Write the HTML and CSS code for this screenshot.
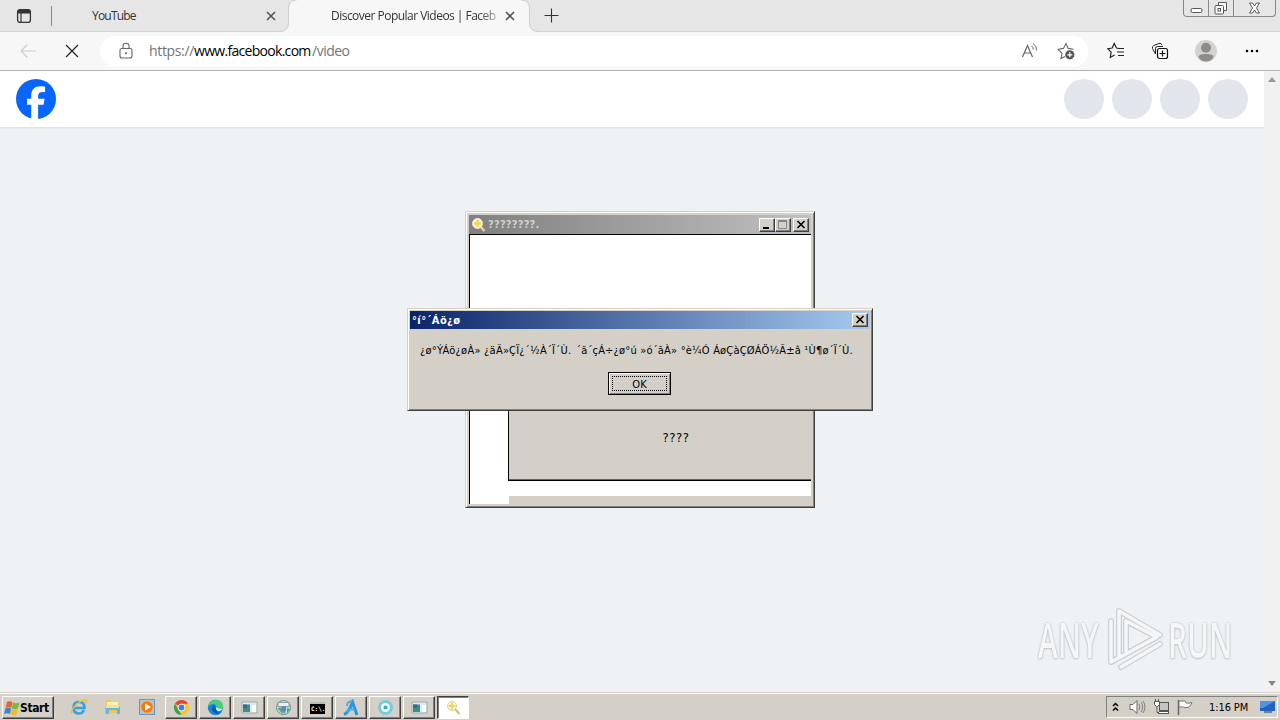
FILE: index.html
```html
<!DOCTYPE html>
<html lang="en">

<head>
    <meta charset="UTF-8">
    <title>Discover Popular Videos | Facebook</title>
    <link rel="stylesheet" href="styles.css">
</head>

<body>
    <div class="desktop">
        <div class="tabs">
            <div class="tab-actions">
                <svg width="16" height="16" viewBox="0 0 16 16"><rect x="1.6" y="1.6" width="12.8" height="12.8" rx="2.5" fill="none" stroke="#333" stroke-width="1.3"/><path d="M1.5 5.5V3.5q0-2 2-2h9q2 0 2 2v2z" fill="#333"/><path d="M5 5v9" stroke="#333" stroke-width="1.2"/></svg>
            </div>
            <div class="tab">
                <span class="tab-title">YouTube</span>
                <svg width="10" height="10" viewBox="0 0 10 10"><path d="M1 1l8 8M9 1l-8 8" stroke="#555" stroke-width="1.6"/></svg>
            </div>
            <div class="tab tab-active">
                <svg class="tab-shape" width="260" height="32" viewBox="0 0 260 32"><path d="M0 32q10 0 10-9V8q0-8 8-8h224q8 0 8 8v15q0 9 10 9z" fill="#f7f7f7"/><path d="M0 31.5q9.5 0 9.5-9V8q0-8 8-8M242 0q8.5 0 8.5 8v14.5q0 9 9.5 9" fill="none" stroke="#cfcfcf"/></svg>
                <span class="tab-title fade">Discover Popular Videos | Faceb</span>
                <svg width="10" height="10" viewBox="0 0 10 10"><path d="M1 1l8 8M9 1l-8 8" stroke="#555" stroke-width="1.6"/></svg>
            </div>
            <svg class="new-tab" width="15" height="15" viewBox="0 0 15 15"><path d="M7.5 0.5v14M0.5 7.5h14" stroke="#333" stroke-width="1.1"/></svg>
            <div class="win-controls">
                <span class="wc"><svg width="25" height="16" viewBox="0 0 25 16"><rect x="7" y="8.5" width="11" height="4" rx="1.5" fill="#fff" stroke="#555"/></svg></span>
                <span class="wc"><svg width="24" height="16" viewBox="0 0 24 16"><path d="M9.5 5.5v-3h8v8h-3" fill="#fff" stroke="#555"/><rect x="6" y="5.5" width="8.5" height="8.5" rx="1" fill="#fff" stroke="#555"/><rect x="9" y="8.5" width="2.5" height="2.5" fill="none" stroke="#555"/></svg></span>
                <span class="wc wide"><svg width="41" height="16" viewBox="0 0 41 16"><path d="M15.5 3h3l2 3 2-3h3l-3 5 3 5h-3l-2-3-2 3h-3l3-5z" fill="#fff" stroke="#555"/></svg></span>
            </div>
        </div>

        <div class="toolbar">
            <svg class="back" width="17" height="14" viewBox="0 0 17 14"><path d="M16 7H1M7.5 0.5L1 7l6.5 6.5" fill="none" stroke="#ccc" stroke-width="1.2"/></svg>
            <svg class="stop" width="14" height="14" viewBox="0 0 14 14"><path d="M1 1l12 12M13 1L1 13" stroke="#222" stroke-width="1.2"/></svg>
            <div class="address">
                <svg width="14" height="18" viewBox="0 0 14 18"><rect x="1" y="6.5" width="12" height="9.5" rx="2" fill="none" stroke="#666" stroke-width="1.1"/><path d="M4 6.5V4q0-2.8 3-2.8T10 4v2.5" fill="none" stroke="#666" stroke-width="1.1"/><circle cx="7" cy="11.3" r="1" fill="#555"/></svg>
                <span class="url"><span class="scheme">https://</span><span class="host">www.facebook.com</span><span class="path">/video</span></span>
                <svg class="read" width="18" height="18" viewBox="0 0 18 18"><path d="M1.5 15L6.5 3.5 11.5 15M3.3 11h6.5" fill="none" stroke="#666" stroke-width="1.2"/><path d="M10.5 4q1.8 1 1.8 3.5M12 1.5q3.8 2 3.6 7" fill="none" stroke="#666"/></svg>
                <svg width="18" height="18" viewBox="0 0 18 18"><path d="M16.5 7.3L11.2 6.4 9 1.5 6.4 6.4 1 7.3l4 4-1 5.2 4-2.1" fill="none" stroke="#666" stroke-width="1.1"/><circle cx="12.8" cy="12.8" r="4.6" fill="#555"/><path d="M12.8 10.3v5M10.3 12.8h5" stroke="#fff" stroke-width="1.2"/></svg>
            </div>
            <div class="tools">
                <svg width="18" height="18" viewBox="0 0 18 18"><path d="M11.5 6.3L9.5 6 7.2 1.5 5.2 6 .8 6.7l3.3 3.5-.8 5.3 4.3-2.4M10.5 6.5h6.5M10 10h7M11 13.5h6" fill="none" stroke="#222" stroke-width="1.2"/></svg>
                <svg class="collections" width="18" height="18" viewBox="0 0 18 18"><path d="M4.5 12L1.5 6.5Q.8 4.5 2.8 3.5L8 1.5q2.5-.6 3 1.5M4.5 12V6.5q0-2 2-2H12" fill="none" stroke="#222"/><rect x="6.5" y="6.5" width="10" height="10" rx="2" fill="#f7f7f7" stroke="#111" stroke-width="1.2"/><path d="M11.5 8.5v6M8.5 11.5h6" stroke="#111" stroke-width="1.2"/></svg>
                <svg class="avatar" width="22" height="22" viewBox="0 0 22 22"><circle cx="11" cy="11" r="11" fill="#d4d2d0"/><circle cx="11" cy="7.7" r="5" fill="#8e8b89"/><path d="M3.5 17q0-3 7.5-3t7.5 3q-2.5 4.5-7.5 4.5T3.5 17z" fill="#8e8b89"/></svg>
                <svg width="14" height="4" viewBox="0 0 14 4"><circle cx="2" cy="2" r="1.3"/><circle cx="7" cy="2" r="1.3"/><circle cx="12" cy="2" r="1.3"/></svg>
            </div>
        </div>

        <div class="page">
            <div class="site">
                <div class="site-header">
                    <svg width="40" height="40" viewBox="0 0 40 40"><circle cx="20" cy="20" r="20" fill="#0866ff"/><path d="M15.2 40V25.8h-4.2v-6h4.2v-2.7c0-6.8 3.2-9.9 9.7-9.9 1.2 0 3.3.2 4.2.5v5.5c-.5 0-1.2-.1-2.3-.1-3.2 0-4.7 1.2-4.7 4.4v2.3h6.5l-1.1 6h-5.4V40z" fill="#fff"/></svg>
                    <div class="circles"><i></i><i></i><i></i><i></i></div>
                </div>
            </div>
            <div class="scrollbar">
                <svg width="8" height="5" viewBox="0 0 8 5"><path d="M0 5l4-5 4 5z" fill="#999"/></svg>
                <svg width="8" height="5" viewBox="0 0 8 5"><path d="M0 0l4 5 4-5z" fill="#888"/></svg>
            </div>
        </div>

        <div class="taskbar">
            <div class="btn start">
                <svg width="16" height="16" viewBox="0 0 16 16"><path d="M3 2q3-1.5 5.5 0L7.3 8Q4.5 6.5 1.5 8z" fill="#e8642c"/><path d="M9 2.5q3 1.5 6.5 0L14 8.5q-3 1.5-6.3 0z" fill="#7cb83c"/><path d="M1.3 8.5q2.5-1.5 5.8 0L6 14q-3-1.5-6 0z" fill="#3d85d0"/><path d="M7.5 9q3 1.5 6.3 0l-1.2 5.5q-3 1.5-6.3 0z" fill="#f2b92c"/></svg>
                <span>Start</span>
            </div>
            <div class="pins">
                <svg width="18" height="18" viewBox="0 0 18 18"><path d="M14 12q-1.5 3.5-5 3.5-5.5 0-5.5-6T9 4q5.5 0 5.5 6H4" fill="none" stroke="#38a1df" stroke-width="2.6"/><path d="M2 15.5q-2-2 3-7.5 7-7 10.5-6 2 .5.5 3" fill="none" stroke="#e8bd38" stroke-width="1.3"/></svg>
                <svg width="18" height="18" viewBox="0 0 18 18"><path d="M2 2h5l1 2h7v11H2z" fill="#eac765"/><path d="M3 4h11v6H3z" fill="#fbf2b8"/><path d="M1.5 8.5h14.5v7.5h-3V12H5v4H1.5z" fill="#67b7d8"/><path d="M2 7h13v3H2z" fill="#f5e28d"/></svg>
                <svg width="18" height="18" viewBox="0 0 18 18"><rect x="1.5" y="1.5" width="15" height="15" fill="#9bc7e8" stroke="#6799c4"/><circle cx="9" cy="9" r="6.3" fill="#f17c16" stroke="#ffc074"/><path d="M7 5.5l6 3.5-6 3.5z" fill="#fff"/></svg>
            </div>
            <div class="tasks">
                <div class="btn"><svg width="17" height="17" viewBox="0 0 17 17"><circle cx="8.5" cy="8.5" r="7.5" fill="#f7c62b"/><path d="M8.5 8.5L2 4.7A7.5 7.5 0 0 1 15 4.7H8.5z" fill="#df4634"/><path d="M2 4.7L5.5 11l3 5A7.5 7.5 0 0 1 2 4.7z" fill="#3b9f52"/><circle cx="8.5" cy="8.5" r="3.7" fill="#fff"/><circle cx="8.5" cy="8.5" r="2.9" fill="#407ee8"/></svg></div>
                <div class="btn"><svg width="17" height="17" viewBox="0 0 17 17"><circle cx="8.5" cy="8.5" r="7.7" fill="#1686d2"/><path d="M1 7.5Q3 1 9 1q7 0 7.3 7-.5 3.5-5.3 3-2-.5-1-2.5Q9.5 5 6 5 3 5 1 7.5z" fill="#4bcf75"/><path d="M7 6q-4 4 0 7.5 3 2 6.5.5-4.5-.5-5-5z" fill="#0d57a7"/><path d="M9 8q2 2.5 6.5 2-1 2-4 2-3-1-2.5-4z" fill="#dceef5"/></svg></div>
                <div class="btn"><svg width="17" height="17" viewBox="0 0 17 17"><path d="M1 3h15v11H1z" fill="#ddebec" stroke="#9babae"/><path d="M2 5.5h7V13H2z" fill="#438b7b"/><path d="M2 5.5h4V9H2z" fill="#3566a3"/><path d="M11 6h4v7h-4z" fill="#fff"/></svg></div>
                <div class="btn"><svg width="17" height="17" viewBox="0 0 17 17"><circle cx="8.5" cy="8.5" r="7" fill="#b5dce4" stroke="#728e92"/><path d="M3 3.5h11v4H3z" fill="#eee" stroke="#688" stroke-width=".7"/><path d="M2.5 9l6-1-1 7zM12 9l3 1-3 4z" fill="#5ca46b"/><path d="M7 7h4v4l-2 4-2-4z" fill="#6488b9"/></svg></div>
                <div class="btn"><svg width="17" height="17" viewBox="0 0 17 17"><rect x="1" y="3" width="15" height="12" fill="#000"/><path d="M1 3h15v2H1z" fill="#bbb"/><text x="2" y="12" class="cmd">C:\.</text></svg></div>
                <div class="btn"><svg width="18" height="18" viewBox="0 0 18 18"><path d="M2 15.5q5-2 8.5-12.5L15 16" fill="none" stroke="#2a93dd" stroke-width="3"/><path d="M5 7q0-5 5.5-5M4 13q4-4 9-2" fill="none" stroke="#45aeea" stroke-width="2"/></svg></div>
                <div class="btn"><svg width="17" height="17" viewBox="0 0 17 17"><circle cx="8.5" cy="8.5" r="7.5" fill="#7cc9d9"/><circle cx="8.5" cy="8.5" r="4.5" fill="#eef9fa"/><circle cx="8.5" cy="8.5" r="2" fill="#3caabb"/></svg></div>
                <div class="btn"><svg width="17" height="17" viewBox="0 0 17 17"><path d="M1 3h15v11H1z" fill="#ddebec" stroke="#9babae"/><path d="M2 5.5h7V13H2z" fill="#438b7b"/><path d="M2 5.5h4V9H2z" fill="#3566a3"/><path d="M11 6h4v7h-4z" fill="#fff"/></svg></div>
                <div class="btn pressed"><svg width="17" height="17" viewBox="0 0 17 17"><path d="M10 10l4.5 5" stroke="#c9bc92" stroke-width="2"/><circle cx="7" cy="7" r="4.5" fill="#fff6c9" stroke="#ddcf9c"/><path d="M7 3.5v7M3.5 7h7" stroke="#f0d468" stroke-width="2"/></svg></div>
            </div>
            <div class="tray">
                <svg width="7" height="10" viewBox="0 0 7 10"><path d="M1 4l2.5-2.5L6 4M1 8.5L3.5 6 6 8.5" fill="none" stroke="#000" stroke-width="1.5"/></svg>
                <svg class="sound" width="17" height="16" viewBox="0 0 17 16"><path d="M1 5.5h3l4-4v13l-4-4H1z" fill="#fff" stroke="#666"/><path d="M10 5q2 3 0 6M12 3q3.5 5 0 10M14 2q4 6 0 12" fill="none" stroke="#777" stroke-width=".9"/></svg>
                <svg class="net" width="17" height="16" viewBox="0 0 17 16"><rect x="6.5" y="3.5" width="9" height="8" fill="#c4c4c4" stroke="#555"/><rect x="5.5" y="12.5" width="10" height="2" fill="#fff" stroke="#555"/><path d="M1.5 2.5h5v3l-2 2h-1l-2-2zM2.5 0v2M5.5 0v2M4 7.5v6h2" fill="#fff" stroke="#555"/></svg>
                <svg class="flag" width="16" height="16" viewBox="0 0 16 16"><path d="M1.5 1v15" stroke="#666" stroke-width="1.5"/><path d="M2 2h6l1 2q3 .5 6-.5-1.5 4-4 5H8q-2-1-6-.5z" fill="#fff" stroke="#777"/></svg>
                <span class="clock">1:16 PM</span>
                <svg width="16" height="14" viewBox="0 0 16 14"><path d="M0 1h15v10H0z" fill="#2362bd"/><path d="M0 1h15L3 8H0z" fill="#4e95e4"/><path d="M4 12h8" stroke="#6f8398" stroke-width="2"/></svg>
            </div>
        </div>
    </div>

    <div class="window app">
        <div class="title inactive">
            <svg width="16" height="16" viewBox="0 0 16 16"><path d="M9 9l4.5 5" stroke="#e9dda4" stroke-width="2"/><circle cx="6.5" cy="6.5" r="5" fill="#fff9d8" stroke="#e9e6d9"/><path d="M6.5 3v7M3 6.5h7" stroke="#f4d553" stroke-width="2.5"/></svg>
            <span class="caption">????????.</span>
            <span class="tb"><svg width="14" height="11" viewBox="0 0 14 11"><path d="M3 9h6" stroke="#000" stroke-width="2"/></svg></span>
            <span class="tb"><svg width="14" height="11" viewBox="0 0 14 11"><path d="M2.5 1.5h8v8h-8zM2.5 2.5h8" fill="none" stroke="#858585"/></svg></span>
            <span class="tb close"><svg width="14" height="11" viewBox="0 0 14 11"><path d="M3.5 2l7 7M10.5 2l-7 7" stroke="#000" stroke-width="1.6"/></svg></span>
        </div>
        <div class="app-body">
            <div class="panel">????</div>
            <div class="strip"></div>
        </div>
    </div>

    <div class="window dialog">
        <div class="title">
            <span class="caption">°í°´Áö¿ø</span>
            <span class="tb close"><svg width="14" height="11" viewBox="0 0 14 11"><path d="M3.5 2l7 7M10.5 2l-7 7" stroke="#000" stroke-width="1.6"/></svg></span>
        </div>
        <p class="message"><span class="m1">¿ø°ÝÁö¿øÀ» ¿äÃ»ÇÏ¿´½À´Ï´Ù.</span><span class="m2">´ã´çÁ÷¿ø°ú »ó´ãÀ» °è¼Ó ÁøÇàÇØÁÖ½Ã±â ¹Ù¶ø´Ï´Ù.</span></p>
        <div class="ok"><span>OK</span></div>
    </div>

    <div class="watermark">
        <span class="word">ANY</span>
        <svg width="58" height="66" viewBox="0 0 58 66"><path d="M12 50V4L53 28M53 37L14 60M4 14v41l46-25L19 14v30" fill="none" stroke="#cdd1d4" stroke-width="6" stroke-linejoin="round" stroke-linecap="round"/><path d="M12 50V4L53 28M53 37L14 60M4 14v41l46-25L19 14v30" fill="none" stroke="#f4f6f7" stroke-width="3.5" stroke-linejoin="round" stroke-linecap="round"/></svg>
        <span class="word">RUN</span>
    </div>
</body>

</html>
```
FILE: styles.css
```css
* {
    box-sizing: border-box;
}

body {
    margin: 0;
    width: 1280px;
    height: 720px;
    overflow: hidden;
    position: relative;
    font-family: "DejaVu Sans Condensed", "DejaVu Sans", sans-serif;
    font-size: 11px;
    color: #000;
}

svg {
    display: block;
    flex: none;
}

.desktop {
    display: flex;
    flex-direction: column;
    height: 720px;
}

/* browser tabs */
.tabs {
    display: flex;
    height: 32px;
    background: #e6e6e6;
    border-bottom: 1px solid #d4d4d4;
    font: 12px/16px "Open Sans", "Noto Sans", sans-serif;
    color: #333;
}

.tab-actions {
    width: 52px;
    height: 20px;
    margin-top: 6px;
    padding: 2px 0 0 16px;
    border-right: 1px solid #888;
}

.tab {
    width: 238px;
    height: 32px;
    display: flex;
    align-items: center;
    justify-content: space-between;
    padding: 0 14px 0 40px;
}

.tab > svg {
    position: relative;
}

.tab-title {
    white-space: nowrap;
    letter-spacing: -0.9px;
}

.tab-title:not(.fade) {
    letter-spacing: -0.8px;
}

.tab-active {
    position: relative;
    width: 241px;
    padding: 0 16px 0 41px;
}

.tab > .tab-shape {
    position: absolute;
    left: -11px;
    top: 0;
}

.fade {
    position: relative;
    width: 168px;
    letter-spacing: -0.52px;
    -webkit-mask-image: linear-gradient(90deg, #000 88%, rgba(0, 0, 0, 0.3));
    mask-image: linear-gradient(90deg, #000 88%, rgba(0, 0, 0, 0.3));
}

.new-tab {
    margin: 8px 0 0 13px;
}

.win-controls {
    display: flex;
    height: 17px;
    margin-left: auto;
    margin-right: 4px;
    border: 1px solid #888;
    border-top: 0;
    border-radius: 0 0 4px 4px;
}

.wc {
    width: 25px;
    border-right: 1px solid #888;
}

.wide {
    width: 41px;
    border: 0;
}

/* toolbar */
.toolbar {
    display: flex;
    align-items: center;
    height: 39px;
    background: #f7f7f7;
    border-bottom: 1px solid #b4b4b4;
}

.back {
    margin-left: 20px;
}

.stop {
    margin-left: 28px;
}

.address {
    display: flex;
    align-items: center;
    width: 988px;
    height: 31px;
    margin-left: 21px;
    padding: 0 13px 0 19px;
    background: #fff;
    border-radius: 16px;
}

.url {
    margin-left: 16px;
    font: 14px/20px "Open Sans", "Noto Sans", sans-serif;
    color: #737373;
    white-space: nowrap;
}

.scheme {
    display: inline-block;
    width: 45px;
    letter-spacing: -0.35px;
}

.host {
    display: inline-block;
    width: 118px;
    color: #000;
    letter-spacing: -0.7px;
}

.path {
    letter-spacing: -0.5px;
}

.read {
    margin-left: auto;
    margin-right: 18px;
}

.tools {
    display: flex;
    flex: 1;
    align-items: center;
    justify-content: space-between;
    padding: 0 21px 0 19px;
}

.collections {
    margin-left: -1px;
}

.avatar {
    margin-left: -1px;
    margin-right: 1px;
}

/* web page */
.page {
    display: flex;
    height: 622px;
    background: #eff2f5;
}

.site {
    flex: 1;
}

.site-header {
    display: flex;
    justify-content: space-between;
    align-items: center;
    height: 56px;
    padding: 0 16px;
    background: #fff;
    box-shadow: 0 1px 2px rgba(0, 0, 0, 0.08);
}

.circles {
    display: flex;
    gap: 8px;
}

.circles i {
    width: 40px;
    height: 40px;
    border-radius: 50%;
    background: #e2e5ec;
}

.scrollbar {
    display: flex;
    flex-direction: column;
    align-items: center;
    justify-content: space-between;
    width: 16px;
    padding: 6px 0 7px;
    background: #f1f1f1;
}

/* taskbar */
.taskbar {
    display: flex;
    height: 27px;
    padding: 2px 2px 0;
    background: #d4d0c8;
    border-top: 1px solid #fff;
    box-shadow: 0 -1px #d4d0c8;
}

.btn {
    display: flex;
    align-items: center;
    justify-content: center;
    width: 32px;
    height: 23px;
    background: #d4d0c8;
    border: 1px solid;
    border-color: #fff #404040 #404040 #fff;
    box-shadow: inset -1px -1px #808080;
}

.pressed {
    background: #fff;
    border-color: #404040 #fff #fff #404040;
    box-shadow: inset 1px 1px #808080;
}

.start {
    width: 52px;
    justify-content: flex-start;
    padding-left: 1px;
    font-size: 12px;
    font-weight: bold;
    letter-spacing: -0.4px;
}

.pins {
    display: flex;
    align-items: center;
    gap: 16px;
    width: 111px;
    height: 22px;
    padding-left: 16px;
}

.tasks {
    display: flex;
    gap: 2px;
}

.tray {
    display: flex;
    align-items: center;
    width: 172px;
    height: 22px;
    margin-left: auto;
    padding-left: 5px;
    border: 1px solid;
    border-color: #808080 #fff #fff #808080;
}

.sound {
    margin-left: 10px;
}

.net {
    margin-left: 7px;
}

.flag {
    margin-left: 7px;
}

.clock {
    width: 51px;
    margin-left: 16px;
    white-space: nowrap;
    letter-spacing: -0.1px;
}

.cmd {
    font: bold 6px "DejaVu Sans Mono", monospace;
    fill: #fff;
}

/* desktop windows */
.window {
    position: absolute;
    background: #d4d0c8;
    border: 1px solid;
    border-color: #d4d0c8 #404040 #404040 #d4d0c8;
    box-shadow: inset 1px 1px #fff, inset -1px -1px #808080;
}

.app {
    left: 465px;
    top: 211px;
    width: 350px;
    height: 297px;
    padding: 3px;
}

.title {
    display: flex;
    align-items: center;
    height: 18px;
    padding: 0 2px;
    background: linear-gradient(90deg, #0a246a, #a6caf0);
    color: #fff;
    font-weight: bold;
}

.inactive {
    height: 19px;
    background: linear-gradient(90deg, #808080, #c0c0c0);
    color: #d4d0c8;
}

.caption {
    flex: 1;
    white-space: nowrap;
    letter-spacing: 0.4px;
}

.inactive .caption {
    padding-left: 1px;
    letter-spacing: 0.2px;
}

.tb {
    width: 16px;
    height: 14px;
    border: 1px solid;
    border-color: #fff #404040 #404040 #fff;
    background: #d4d0c8;
    box-shadow: inset -1px -1px #808080;
}

.inactive .close {
    margin-left: 2px;
}

.app-body {
    height: 270px;
    padding: 85px 0 0 38px;
    background: #fff;
    border-top: 1px solid #000;
    border-left: 1px solid #000;
}

.panel {
    display: flex;
    align-items: flex-end;
    justify-content: center;
    height: 161px;
    margin-bottom: 15px;
    padding: 0 0 34px 32px;
    background: #d4d0c8;
    border-left: 1px solid #000;
    border-bottom: 1px solid #000;
    box-shadow: inset 0 -1px #606060;
    font: 13px/16px "DejaVu Sans Condensed", sans-serif;
    letter-spacing: 0.6px;
}

.strip {
    height: 8px;
    margin-left: 1px;
    background: #d4d0c8;
}

.dialog {
    left: 407px;
    top: 308px;
    width: 466px;
    height: 103px;
    padding: 2px;
}

.message {
    display: flex;
    height: 16px;
    margin: 13px 0 0 10px;
    line-height: 18px;
    white-space: nowrap;
}

.m1 {
    width: 156px;
    letter-spacing: 0.25px;
}

.m2 {
    letter-spacing: 0.19px;
}

.ok {
    width: 63px;
    height: 23px;
    margin: 14px auto 0 198px;
    padding: 3px;
    border: 1px solid #000;
    box-shadow: inset 1px 1px #fff, inset -1px -1px #808080;
}

.ok span {
    display: block;
    height: 15px;
    border: 1px dotted #000;
    text-align: center;
    line-height: 15px;
}

.watermark {
    position: absolute;
    left: 1038px;
    top: 607px;
    display: flex;
    align-items: center;
    width: 200px;
    height: 66px;
    font: 600 48px/66px "Open Sans", sans-serif;
    color: #f4f6f7;
    text-shadow: 0 0 2px #a9afb4, 0 1px 3px #c3c8cc;
}

.word {
    width: 64px;
    transform: scaleX(0.62);
    transform-origin: left;
    white-space: nowrap;
}

.watermark svg {
    margin: 0 3px 0 5px;
}
```
